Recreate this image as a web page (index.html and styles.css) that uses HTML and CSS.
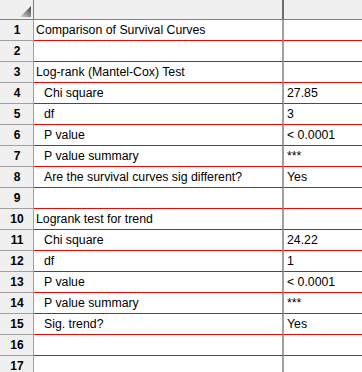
FILE: index.html
```html
<!DOCTYPE html>
<html>
<head>
<meta charset="utf-8">
<link rel="stylesheet" href="styles.css">
</head>
<body>
<div class="sheet">
  <div class="row head">
    <div class="rh corner"><svg width="11" height="11" viewBox="0 0 11 11"><defs><linearGradient id="g" x1="0" y1="1" x2="1" y2="0"><stop offset="0" stop-color="#d8d8d8"/><stop offset="1" stop-color="#404040"/></linearGradient></defs><polygon points="0,11 11,11 11,0" fill="url(#g)"/></svg></div>
    <div class="ca"></div>
    <div class="cb"></div>
  </div>
  <div class="row"><div class="rh">1</div><div class="ca">Comparison of Survival Curves</div><div class="cb"></div></div>
  <div class="row"><div class="rh">2</div><div class="ca"></div><div class="cb"></div></div>
  <div class="row"><div class="rh">3</div><div class="ca">Log-rank (Mantel-Cox) Test</div><div class="cb"></div></div>
  <div class="row"><div class="rh">4</div><div class="ca ind">Chi square</div><div class="cb">27.85</div></div>
  <div class="row"><div class="rh">5</div><div class="ca ind">df</div><div class="cb">3</div></div>
  <div class="row"><div class="rh">6</div><div class="ca ind">P value</div><div class="cb">&lt; 0.0001</div></div>
  <div class="row"><div class="rh">7</div><div class="ca ind">P value summary</div><div class="cb">***</div></div>
  <div class="row"><div class="rh">8</div><div class="ca ind">Are the survival curves sig different?</div><div class="cb">Yes</div></div>
  <div class="row"><div class="rh">9</div><div class="ca"></div><div class="cb"></div></div>
  <div class="row"><div class="rh">10</div><div class="ca">Logrank test for trend</div><div class="cb"></div></div>
  <div class="row"><div class="rh">11</div><div class="ca ind">Chi square</div><div class="cb">24.22</div></div>
  <div class="row"><div class="rh">12</div><div class="ca ind">df</div><div class="cb">1</div></div>
  <div class="row"><div class="rh">13</div><div class="ca ind">P value</div><div class="cb">&lt; 0.0001</div></div>
  <div class="row"><div class="rh">14</div><div class="ca ind">P value summary</div><div class="cb">***</div></div>
  <div class="row"><div class="rh">15</div><div class="ca ind">Sig. trend?</div><div class="cb">Yes</div></div>
  <div class="row"><div class="rh">16</div><div class="ca"></div><div class="cb"></div></div>
  <div class="row"><div class="rh">17</div><div class="ca"></div><div class="cb"></div></div>
</div>
</body>
</html>
```
FILE: styles.css
```css
html, body {
  margin: 0;
  padding: 0;
  background: #fff;
}
.sheet {
  width: 362px;
  height: 372px;
  overflow: hidden;
  font-family: "Liberation Sans", Arial, sans-serif;
  font-size: 12.3px;
  color: #000;
}
.row {
  display: flex;
  height: 21px;
}
.row > div {
  box-sizing: border-box;
  height: 21px;
  display: flex;
  align-items: center;
  white-space: nowrap;
  overflow: hidden;
}
.rh {
  width: 34px;
  flex: none;
  justify-content: center;
  background: #f0f0f0;
  border-right: 1px solid #a0a0a0;
  border-bottom: 1px solid #a0a0a0;
  font-weight: bold;
  font-size: 12px;
  padding-left: 1px;
}
.ca {
  width: 250px;
  flex: none;
  border-right: 2px solid #a0a0a0;
  border-bottom: 1px solid #ff0000;
  padding-left: 2px;
}
.ca.ind {
  padding-left: 10px;
}
.cb {
  flex: 1;
  border-bottom: 1px solid #ff0000;
  padding-left: 3px;
}
.head, .head > div {
  height: 20px !important;
}
.head > div {
  background: #f0f0f0;
  border-bottom: 1px solid #808080 !important;
}
.head .ca {
  border-right-color: #6e6e6e;
}
.head .corner {
  justify-content: flex-end;
  align-items: flex-end;
  padding: 0 2px 2px 0;
  border-right-color: #808080;
}
.head .corner svg {
  display: block;
}
```
